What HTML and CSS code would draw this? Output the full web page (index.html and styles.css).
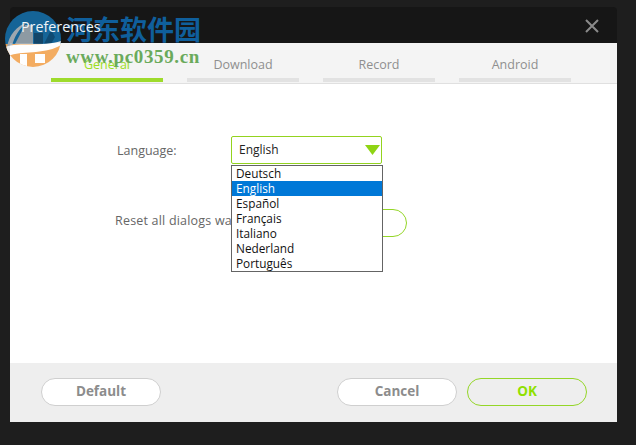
FILE: index.html
```html
<!DOCTYPE html>
<html lang="en">
<head>
<meta charset="utf-8">
<title>Preferences</title>
<link rel="stylesheet" href="styles.css">
</head>
<body>
<div class="window">
  <header class="titlebar">
    <span class="title">Preferences</span>
    <svg class="close" width="14" height="14" viewBox="0 0 14 14"><path d="M1 1L13 13M13 1L1 13" stroke="#8a8a8a" stroke-width="2" fill="none"/></svg>
  </header>
  <nav class="tabs">
    <div class="tab active">General</div>
    <div class="tab">Download</div>
    <div class="tab">Record</div>
    <div class="tab">Android</div>
  </nav>
  <main class="content">
    <div class="row lang-row">
      <label class="label lang-label">Language:</label>
      <div class="select">
        <span>English</span>
        <svg class="arrow" width="15" height="10" viewBox="0 0 15 10"><path d="M0 0H15L7.5 10Z" fill="#8fd414"/></svg>
        <ul class="list">
          <li>Deutsch</li>
          <li class="selected">English</li>
          <li>Español</li>
          <li>Français</li>
          <li>Italiano</li>
          <li>Nederland</li>
          <li>Português</li>
        </ul>
      </div>
    </div>
    <div class="row reset-row">
      <label class="label">Reset all dialogs warnings:</label>
      <button class="pill green reset">Reset</button>
    </div>
  </main>
  <footer class="footer">
    <button class="pill">Default</button>
    <div class="footer-right">
      <button class="pill">Cancel</button>
      <button class="pill green">OK</button>
    </div>
  </footer>
</div>
<div class="watermark">
  <svg class="wm-logo" width="56" height="56" viewBox="0 0 56 56">
    <defs><clipPath id="c"><circle cx="28" cy="28" r="28"/></clipPath></defs>
    <g clip-path="url(#c)">
      <rect width="56" height="33" fill="#156ba3"/>
      <rect y="33" width="56" height="23" fill="#f3a655"/>
      <path d="M2 36C4 24 12 15 22 11C14 18 9 26 7 35Z" fill="#a9b4bc"/>
      <path d="M10 33L20 14H28V33Z" fill="#98a6b0"/>
      <path d="M29 22H38V33H29Z" fill="#124a70"/>
      <path d="M39 33L46 19L50 26L46 33Z" fill="#0f4f7a"/>
      <path d="M0 36C14 31 38 36 56 30V34C42 43 20 40 6 44L0 46Z" fill="#fff"/>
      <path d="M15 43H22V56H15ZM30 43H40V52H30Z" fill="#fff"/>
    </g>
  </svg>
  <div class="wm-cn">河东软件园</div>
  <div class="wm-url">www.pc0359.cn</div>
</div>
</body>
</html>
```
FILE: styles.css
```css
* { box-sizing: border-box; }
html, body { margin: 0; height: 100%; }
body {
  background: #1e1e1e;
  padding: 7px 0 0 10px;
  font-family: "Open Sans", "Noto Sans", sans-serif;
  overflow: hidden;
}
.window {
  width: 607px;
  height: 415px;
  display: flex;
  flex-direction: column;
  background: #161616;
  border-radius: 4px 4px 0 0;
}
.titlebar {
  height: 36px;
  flex: none;
  padding: 0 18px 0 11px;
  display: flex;
  align-items: center;
  justify-content: space-between;
}
.title { color: #eef4f8; font-size: 14.3px; position: relative; z-index: 3; margin-top: 2px; }
.close { margin-top: 2px; }
.tabs {
  flex: none;
  height: 41px;
  background: #f4f4f4;
  border-bottom: 1px solid #e0e0e0;
  padding-left: 41px;
  display: flex;
  gap: 24px;
}
.tab {
  width: 112px;
  height: 39px;
  border-bottom: 4px solid #e2e2e2;
  color: #8f8f8f;
  font-size: 12.5px;
  text-align: center;
  padding-top: 13px;
  line-height: 18px;
}
.tab.active { color: #9bde22; border-bottom-color: #9edb2c; }
.content {
  flex: 1;
  background: #fff;
  padding-top: 52px;
}
.row { display: flex; align-items: center; }
.label { color: #666; font-size: 12.5px; letter-spacing: .2px; white-space: nowrap; }
.lang-label { margin-left: 107px; width: 114px; letter-spacing: 0; }
.select {
  position: relative;
  width: 151px;
  height: 28px;
  border: 1px solid #93d31f;
  border-radius: 2px;
  display: flex;
  align-items: center;
  justify-content: space-between;
  padding: 0 1px 0 7px;
  font-size: 12px;
  line-height: 24px;
  color: #222;
}
.select > span { margin-top: -1px; }
.list {
  position: absolute;
  left: -1px;
  top: 28px;
  width: 152px;
  height: 107px;
  margin: 0;
  padding: 0;
  list-style: none;
  background: #fff;
  border: 1px solid #646464;
  color: #111;
  z-index: 2;
}
.list li { height: 15px; line-height: 15px; padding-left: 4px; font-size: 11.8px; }
.list li.selected { background: #0078d7; color: #fff; }
.reset-row { margin: 48px 0 0 105px; position: relative; }
.reset { position: absolute; left: 172px; top: -3px; width: 120px; height: 26px; }
.footer {
  flex: none;
  height: 59px;
  background: #eee;
  padding: 15px 30px 0 31px;
  display: flex;
  justify-content: space-between;
  align-items: flex-start;
}
.footer-right { display: flex; gap: 10px; }
.pill {
  width: 120px;
  height: 28px;
  border: 1px solid #cfcfcf;
  border-radius: 14px;
  background: #fff;
  color: #8c8c8c;
  font: 700 13.5px/24px "Open Sans", sans-serif;
  padding: 0 0 2px;
}
.pill.green { border-color: #94d627; color: #8fe000; }
.footer .pill.green { background: #eee; }
.watermark { position: absolute; left: 0; top: 0; width: 210px; height: 72px; pointer-events: none; }
.wm-logo { position: absolute; left: 5px; top: 11px; opacity: .92; }
.wm-cn {
  position: absolute;
  left: 66px;
  top: 13px;
  font: 700 27px/32px "Noto Sans CJK SC", sans-serif;
  color: #0f5f9c;
  white-space: nowrap;
}
.wm-url {
  position: absolute;
  left: 66px;
  top: 47px;
  font: 700 19px/20px "Liberation Serif", serif;
  color: #6aaa5c;
  letter-spacing: .65px;
  white-space: nowrap;
}
```
